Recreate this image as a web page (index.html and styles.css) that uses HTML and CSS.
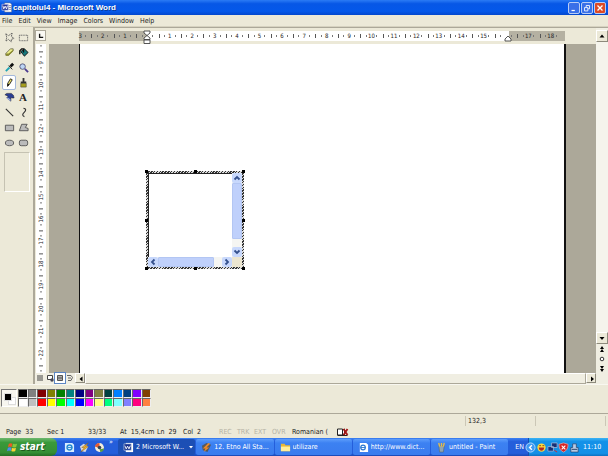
FILE: index.html
```html
<!DOCTYPE html>
<html lang="en">
<head>
<meta charset="utf-8">
<title>capitolul4 - Microsoft Word</title>
<link rel="stylesheet" href="styles.css">
</head>
<body>
<header class="titlebar">
  <svg class="app-icon" viewBox="0 0 12 12"><path fill="#fff" stroke="#778" stroke-width=".6" d="M4 1h6l1.500 1.500V11H4z"/><path stroke="#557" stroke-width=".7" d="M8 4h3M8 6h3M8 8h3"/><path fill="#25349a" stroke="#dde" stroke-width=".6" d="M1 2.500h7v6.500H1z"/><path fill="none" stroke="#fff" d="M2 4l1 3.500L4.500 4.500 6 7.500 7 4"/></svg>
  <h1>capitolul4 - Microsoft Word</h1>
  <div class="window-buttons">
    <button aria-label="Minimize"><svg viewBox="0 0 12 12"><path stroke="#fff" stroke-width="1.500" d="M3 9h4"/></svg></button>
    <button aria-label="Restore"><svg viewBox="0 0 12 12"><path fill="none" stroke="#fff" d="M5 5V3h4v4H7M3 5.500h4v4H3z"/></svg></button>
    <button class="close" aria-label="Close"><svg viewBox="0 0 12 12"><path stroke="#fff" stroke-width="1.600" d="M3 3l6 6M9 3l-6 6"/></svg></button>
  </div>
</header>
<nav class="menu">
  <button>File</button><button>Edit</button><button>View</button><button>Image</button><button>Colors</button><button>Window</button><button>Help</button>
</nav>
<main class="workspace">
  <aside class="toolbox">
    <div class="tools">
      <button aria-label="Free-form select"><svg viewBox="0 0 12 12"><path fill="none" stroke="#555" stroke-dasharray="1.500 .7" d="M2 2l3 2 4-3-1 4 3 2-3 1v3L5 8l-3 2 1-4z"/></svg></button>
      <button aria-label="Select"><svg viewBox="0 0 12 12"><path fill="none" stroke="#666" stroke-dasharray="1.200 .6" d="M1.500 3.500h9v6h-9z"/></svg></button>
      <button aria-label="Eraser"><svg viewBox="0 0 12 12"><path fill="#eff08c" stroke="#554" stroke-width=".8" d="M2 7l5-5h3v2L5 9H2z"/><path fill="#8a8a30" d="M2 7h3l5-4v1.500L5 9.500H2z"/></svg></button>
      <button aria-label="Fill"><svg viewBox="0 0 12 12"><path fill="#18797c" stroke="#111" d="M3 5l4-3 4 4-4 4z"/><path fill="none" stroke="#111" stroke-width="1.500" d="M2 8V4l2-2h2v4"/></svg></button>
      <button aria-label="Pick color"><svg viewBox="0 0 12 12"><path stroke="#111" stroke-width="3" d="M7 5l3-3"/><path stroke="#111" d="M5 4l4 4"/><path stroke="#22a5b4" stroke-width="2" d="M2 10l4-4"/></svg></button>
      <button aria-label="Magnifier"><svg viewBox="0 0 12 12"><circle cx="5" cy="5" r="3" fill="#bcd4f5" stroke="#557" /><path stroke="#4a3a90" stroke-width="2" d="M7.500 7.500L11 11"/></svg></button>
      <button class="selected" aria-label="Pencil"><svg viewBox="0 0 12 12"><path fill="#eee26a" stroke="#111" stroke-width=".9" d="M4 7l3-5 2 1-3 5-2 2z"/><path fill="#111" d="M4 7l2 1-2.500 3z"/></svg></button>
      <button aria-label="Brush"><svg viewBox="0 0 12 12"><path fill="#333" d="M5 1h2v4h2v2H3V5h2z"/><path fill="#a8a01c" stroke="#443" stroke-width=".6" d="M3 7h6v4H3z"/></svg></button>
      <button aria-label="Airbrush"><svg viewBox="0 0 12 12"><path fill="#2a3d94" stroke="#223" stroke-width=".6" d="M1 3l2-1.500h5q3 1.500 3 5H9L7.500 6v4L3 6.500l1.500-2z"/><path fill="#9fb0dc" d="M4 6l3 2v2L3 7z"/></svg></button>
      <button class="text-tool" aria-label="Text">A</button>
      <button aria-label="Line"><svg viewBox="0 0 12 12"><path stroke="#333" stroke-width="1.200" d="M2 2l8 8"/></svg></button>
      <button aria-label="Curve"><svg viewBox="0 0 12 12"><path fill="none" stroke="#333" stroke-width="1.200" d="M6 1.500c3 0 3 2 1 4s-3 4 0 5"/></svg></button>
      <button aria-label="Rectangle"><svg viewBox="0 0 12 12"><path fill="#bbb" stroke="#555" d="M1.500 3.500h9v6h-9z"/></svg></button>
      <button aria-label="Polygon"><svg viewBox="0 0 12 12"><path fill="#bbb" stroke="#555" d="M4 2.500h6L8 6l3 1v2.500H1.500z"/></svg></button>
      <button aria-label="Ellipse"><svg viewBox="0 0 12 12"><ellipse cx="6" cy="6.500" rx="4.500" ry="3" fill="#bbb" stroke="#555"/></svg></button>
      <button aria-label="Rounded rectangle"><svg viewBox="0 0 12 12"><rect x="1.500" y="3.500" width="9" height="6" rx="2" fill="#bbb" stroke="#555"/></svg></button>
    </div>
    <div class="tool-options"></div>
  </aside>
  <section class="document">
    <div class="ruler-row">
      <button class="tab-kind" aria-label="Tab stop"><svg viewBox="0 0 10 10"><path fill="none" stroke="#111" stroke-width="1.500" d="M4 3v4h4"/></svg></button>
      <div class="ruler">
        <div class="marks"><span>3</span><span>2</span><span>1</span><span></span><span>1</span><span>2</span><span>3</span><span>4</span><span>5</span><span>6</span><span>7</span><span>8</span><span>9</span><span>10</span><span>11</span><span>12</span><span>13</span><span>14</span><span>15</span><span></span><span>17</span><span>18</span></div>
        <svg class="indent" viewBox="0 0 8 14"><path fill="#fff" stroke="#444" stroke-width=".9" d="M1 1h6v2L4 5.500 1 3zM4 5.500L7 8v1.500H1V8zM1 10h6v3.500H1z"/></svg>
        <svg class="indent right" viewBox="0 0 8 14"><path fill="#fff" stroke="#444" stroke-width=".9" d="M4 6l3 3v2H1V9z"/></svg>
      </div>
    </div>
    <div class="side-ruler"><div class="marks vertical"><span></span><span>9</span><span>10</span><span>11</span><span>12</span><span>13</span><span>14</span><span>15</span><span>16</span><span>17</span><span>18</span><span>19</span><span>20</span><span>21</span><span>22</span><span></span></div></div>
    <div class="canvas">
      <article class="page">
        <div class="object">
          <div class="object-view"></div>
          <div class="xp-scroll down">
            <button aria-label="Scroll up"><svg viewBox="0 0 10 10"><path fill="none" stroke="#34508c" stroke-width="1.800" d="M2.500 6.500L5 4l2.500 2.500"/></svg></button>
            <i class="thumb"></i>
            <button aria-label="Scroll down"><svg viewBox="0 0 10 10"><path fill="none" stroke="#34508c" stroke-width="1.800" d="M2.500 3.500L5 6l2.500-2.500"/></svg></button>
          </div>
          <div class="xp-scroll across">
            <button aria-label="Scroll left"><svg viewBox="0 0 10 10"><path fill="none" stroke="#34508c" stroke-width="1.800" d="M6.500 2.500L4 5l2.500 2.500"/></svg></button>
            <i class="thumb"></i>
            <button aria-label="Scroll right"><svg viewBox="0 0 10 10"><path fill="none" stroke="#34508c" stroke-width="1.800" d="M3.500 2.500L6 5 3.500 7.500"/></svg></button>
          </div>
          <div class="corner"></div>
          <b class="grip n w"></b><b class="grip n c"></b><b class="grip n e"></b><b class="grip m w"></b><b class="grip m e"></b><b class="grip s w"></b><b class="grip s c"></b><b class="grip s e"></b>
        </div>
      </article>
    </div>
    <div class="vscroll">
      <button class="raised" aria-label="Up"><svg viewBox="0 0 10 10"><path d="M2.500 6.500h5L5 3.500z"/></svg></button>
      <i class="track"></i>
      <button class="raised" aria-label="Down"><svg viewBox="0 0 10 10"><path d="M2.500 4h5L5 7z"/></svg></button>
      <button aria-label="Previous page"><svg viewBox="0 0 10 10"><path d="M3 5l2-3 2 3zM3 8l2-3 2 3z"/></svg></button>
      <button aria-label="Browse"><svg viewBox="0 0 10 10"><circle cx="5" cy="5" r="1.800" fill="#fff" stroke="#333"/></svg></button>
      <button aria-label="Next page"><svg viewBox="0 0 10 10"><path d="M3 2l2 3 2-3zM3 5l2 3 2-3z"/></svg></button>
    </div>
    <div class="hscroll">
      <button aria-label="Normal view"><svg viewBox="0 0 10 10"><path stroke="#444" d="M2 3h6M2 5h6M2 7h6"/></svg></button>
      <button aria-label="Web view"><svg viewBox="0 0 10 10"><path fill="#fff" stroke="#444" d="M2.500 2.500h5v4h-5z"/><circle cx="7" cy="7" r="1.700" fill="#445"/></svg></button>
      <button class="selected" aria-label="Print view"><svg viewBox="0 0 10 10"><path fill="#aaa" stroke="#555" d="M2.500 2.500h5v5h-5z"/><path stroke="#555" d="M3 5h4"/></svg></button>
      <button aria-label="Outline view"><svg viewBox="0 0 10 10"><path fill="none" stroke="#666" d="M2 2.500h4l1.500 2L6 7.500H3M3 5h3"/></svg></button>
      <button class="raised" aria-label="Left"><svg viewBox="0 0 10 10"><path d="M6.500 2.500v5L3.500 5z"/></svg></button>
      <i class="bar"></i>
      <button class="raised" aria-label="Right"><svg viewBox="0 0 10 10"><path d="M4 2.500v5L7 5z"/></svg></button>
    </div>
  </section>
</main>
<section class="palette">
  <div class="current"><i></i><b></b></div>
  <div class="swatches">
    <button class="c-black" aria-label="Black"></button><button class="c-gray" aria-label="Gray"></button><button class="c-maroon" aria-label="Maroon"></button><button class="c-olive" aria-label="Olive"></button><button class="c-green" aria-label="Green"></button><button class="c-teal" aria-label="Teal"></button><button class="c-navy" aria-label="Navy"></button><button class="c-purple" aria-label="Purple"></button><button class="c-moss" aria-label="Moss"></button><button class="c-pine" aria-label="Pine"></button><button class="c-azure" aria-label="Azure"></button><button class="c-steel" aria-label="Steel"></button><button class="c-violet" aria-label="Violet"></button><button class="c-brown" aria-label="Brown"></button>
    <button class="c-white" aria-label="White"></button><button class="c-silver" aria-label="Silver"></button><button class="c-red" aria-label="Red"></button><button class="c-yellow" aria-label="Yellow"></button><button class="c-lime" aria-label="Lime"></button><button class="c-cyan" aria-label="Cyan"></button><button class="c-blue" aria-label="Blue"></button><button class="c-magenta" aria-label="Magenta"></button><button class="c-cream" aria-label="Cream"></button><button class="c-mint" aria-label="Mint"></button><button class="c-ice" aria-label="Ice"></button><button class="c-lilac" aria-label="Lilac"></button><button class="c-rose" aria-label="Rose"></button><button class="c-orange" aria-label="Orange"></button>
  </div>
</section>
<div class="paint-status"><span></span><span>132,3</span><span></span></div>
<div class="word-status">
  <span>Page&nbsp; 33</span><span>Sec 1</span><span>33/33</span><span>At&nbsp; 15,4cm</span><span>Ln&nbsp; 29</span><span>Col&nbsp; 2</span><span class="off">REC</span><span class="off">TRK</span><span class="off">EXT</span><span class="off">OVR</span><span>Romanian (</span>
  <svg viewBox="0 0 12 10"><path fill="#fff" stroke="#222" d="M1 2h5v6H1zM6 3l2-1v6L6 7"/><path stroke="#222" d="M1 8.500h10"/><path stroke="#a31515" stroke-width="1.800" d="M7 2l4 6M11 2L7 8"/></svg>
</div>
<footer class="taskbar">
  <button class="start"><svg viewBox="0 0 12 12"><path fill="#ee5a24" d="M2 2q2-1.500 4 0L5 5.500q-2-1-4 0z"/><path fill="#86c73c" d="M6.600 2q2 1 4.400 0L10 5.500q-2 1-4.300 0z"/><path fill="#4b8cf0" d="M1 6.200q2-1.200 4 0L4 9.700q-2-1-4 .3z"/><path fill="#fcd233" d="M5.500 6.200q2 1.200 4.300 0L9 9.700q-2 1.300-4.300 0z"/></svg>start</button>
  <div class="quick">
    <a href="#" aria-label="Internet Explorer"><svg viewBox="0 0 12 12"><path fill="#d8edff" d="M1 1h8l2 2v8H1z"/><circle cx="6" cy="6" r="2.700" fill="none" stroke="#278ad0" stroke-width="1.500"/><path stroke="#278ad0" d="M4 6h5"/></svg></a>
    <a href="#" aria-label="Winamp"><svg viewBox="0 0 12 12"><path fill="#d9d9de" d="M1 5l4-3 5 3-3 6-4-1z"/><path fill="#f5b828" stroke="#8b5a10" stroke-width=".5" d="M10 1L3 6h3l-4 5 8-6H7z"/></svg></a>
    <a href="#" aria-label="Media player"><svg viewBox="0 0 12 12"><circle cx="6" cy="6" r="4.800" fill="#f5efdc"/><path fill="#e35a30" d="M1 5a5 5 0 0 1 5-4v3L4 6z"/><path fill="#5b9c42" d="M11 7a5 5 0 0 1-4 4L6 8z"/><circle cx="6" cy="6" r="2" fill="#345"/></svg></a>
    <span>»</span>
  </div>
  <div class="tasks">
    <button class="active"><svg viewBox="0 0 12 12"><path fill="#fff" d="M3 1h8v10H3z"/><path fill="#19328e" stroke="#cde" stroke-width=".6" d="M1 2h8v7H1z"/><path fill="none" stroke="#fff" d="M2 4l1.500 3.500L5 4.500l1.500 3L8 4"/></svg><span>2 Microsoft W...</span><svg class="caret" viewBox="0 0 6 6"><path fill="#fff" d="M1 2h4L3 4.500z"/></svg></button>
    <button><svg viewBox="0 0 12 12"><path fill="#57595e" d="M1 4l5-3 5 2-4 8-5-2z"/><path fill="#f18a25" d="M8 1L2 7h3l-2 4 6-5H6l4-4z"/></svg><span>12. Etno All Sta...</span></button>
    <button><svg viewBox="0 0 12 12"><path fill="#e8b636" d="M1 2h4l1 1.500h5V10H1z"/><path fill="#ffed9a" d="M1 5h10v5H1z"/></svg><span>utilizare</span></button>
    <button><svg viewBox="0 0 12 12"><path fill="#fff" d="M2 1h7l2 2v8H2z"/><circle cx="5.500" cy="6" r="2.500" fill="none" stroke="#2c78d2" stroke-width="1.300"/><path stroke="#2c78d2" d="M3 6h5"/></svg><span>http://www.dict...</span></button>
    <button><svg viewBox="0 0 12 12"><path fill="#8fa4b2" stroke="#566" stroke-width=".6" d="M3 4h6l-1 7H4z"/><path stroke="#e6bc49" stroke-width="1.500" d="M4 5L3 1M6 5V1M8 5l1-4"/></svg><span>untitled - Paint</span></button>
  </div>
  <span class="lang">EN</span>
  <div class="tray">
    <button aria-label="Show hidden icons"><svg viewBox="0 0 12 12"><circle cx="6" cy="6" r="5" fill="#3f9af2" stroke="#b8dcff"/><path fill="none" stroke="#fff" stroke-width="1.500" d="M7.500 3.500L5 6l2.500 2.500"/></svg></button>
    <svg viewBox="0 0 12 12"><circle cx="6" cy="6" r="4.500" fill="#ffd83c"/><path fill="#b22a24" d="M3 6h6q-.5 3.500-3 3.500T3 6z"/><path stroke="#742" d="M3.500 4h2M7 4h2"/></svg>
    <svg viewBox="0 0 12 12"><path fill="#182f75" stroke="#a9bddd" stroke-width=".8" d="M5 1h6v5H5zM1 5h6v5H1z"/><path stroke="#d22" d="M8 9l3 2"/></svg>
    <svg viewBox="0 0 12 12"><path fill="#d92424" stroke="#efb1ac" stroke-width=".7" d="M6 1l5 1.500Q11 9 6 11 1 9 1 2.500z"/><path stroke="#fff" stroke-width="1.200" d="M4 4l4 4M8 4L4 8"/></svg>
    <svg viewBox="0 0 12 12"><path fill="#b8cbe5" stroke="#23395f" stroke-width=".7" d="M4 2h4v4h2v5H2V6h2z"/><path stroke="#23395f" d="M3 8h6"/></svg>
    <time>11:10</time>
  </div>
</footer>
</body>
</html>
```
FILE: styles.css
```css
* { box-sizing: border-box; }
body {
  margin: 0;
  min-height: 100vh;
  display: flex;
  flex-direction: column;
  overflow: hidden;
  background: #ece9d8;
  color: #222;
  font: 7px/10px "DejaVu Sans Condensed", "Liberation Sans", sans-serif;
}
button {
  margin: 0;
  padding: 0;
  border: 0;
  background: none;
  color: inherit;
  font: inherit;
}
svg { display: block; flex: none; }

.titlebar {
  height: 15px;
  display: flex;
  align-items: center;
  padding: 0 2px 0 1px;
  background: linear-gradient(#2b7bf5, #0757e6 25%, #0458ea 75%, #0347cd);
  color: #fff;
}
.app-icon { width: 11px; height: 11px; }
.titlebar h1 {
  flex: 1;
  margin: 0 0 0 1px;
  font: bold 8px/12px "Liberation Sans", sans-serif;
  text-shadow: 1px 1px #0a3a9c;
}
.window-buttons { display: flex; gap: 1px; }
.window-buttons button {
  width: 12px;
  height: 12px;
  border: 1px solid #b9cdf5;
  border-radius: 2px;
  background: #3a70e8;
}
.window-buttons .close { background: #dc4a26; }

.menu {
  height: 12px;
  display: flex;
  gap: 6px;
  padding: 1px 2px;
  border-bottom: 1px solid #d6d2c0;
}

.workspace { flex: 1; min-height: 0; display: flex; }
.toolbox { width: 33px; padding: 3px 3px 0 2px; }
.tools { display: grid; grid-template-columns: 1fr 1fr; grid-auto-rows: 15px; }
.tools button { display: grid; place-items: center; border: 1px solid transparent; }
.tools svg { width: 11px; height: 11px; }
.tools .selected { border-color: #a3b8da; border-radius: 2px; background: #fff; }
.tools .text-tool { font: bold 11px/11px "Liberation Serif", serif; }
.tool-options { height: 40px; margin: 2px 0 0 2px; border: 1px solid; border-color: #c5c2b2 #fff #fff #c5c2b2; }

.document {
  flex: 1;
  min-width: 0;
  display: grid;
  grid-template: 16px 1fr 11px / 14px 1fr 12px;
  border: 2px solid #aca899;
  border-width: 1px 0 0 2px;
}
.ruler-row { grid-column: 1 / 3; display: flex; gap: 33px; padding-top: 2px; }
.tab-kind { width: 11px; height: 11px; border: 1px solid #aca899; background: #faf9f3; }
.ruler {
  position: relative;
  flex: 0 1 486px;
  height: 10px;
  margin-top: 1px;
  background: linear-gradient(90deg, #b5b1a2 68px, #fff 68px 430px, #b5b1a2 430px);
}
.marks {
  width: 493px;
  height: 10px;
  margin-left: -10px;
  display: grid;
  grid-auto-flow: column;
  grid-auto-columns: 1fr;
  clip-path: inset(0 0 0 9px);
}
.marks span {
  text-align: center;
  font-size: 6px;
  background:
    linear-gradient(#555, #555) 0 50% / 1px 4px no-repeat,
    linear-gradient(#777, #777) 25% 50% / 1px 2px no-repeat,
    linear-gradient(#777, #777) 75% 50% / 1px 2px no-repeat;
}
.indent { position: absolute; left: 64px; top: -1px; width: 8px; height: 14px; }
.indent.right { left: 425px; }
.side-ruler { width: 10px; margin-left: 1px; background: #fff; overflow: hidden; }
.marks.vertical {
  width: 10px;
  height: 358px;
  margin: -15px 0 -30px;
  grid-auto-flow: row;
  grid-auto-columns: auto;
  grid-auto-rows: 1fr;
  clip-path: none;
}
.vertical span {
  writing-mode: vertical-rl;
  transform: rotate(180deg);
  background:
    linear-gradient(#555, #555) 50% 100% / 4px 1px no-repeat,
    linear-gradient(#777, #777) 50% 25% / 2px 1px no-repeat,
    linear-gradient(#777, #777) 50% 75% / 2px 1px no-repeat;
}

.canvas { padding: 0 30px 0 30px; background: #aca899; }
.page {
  height: 100%;
  padding: 127px 0 0 66px;
  border: 1px solid #111;
  border-width: 0 2px 0 1px;
  background: #fff;
}
.object {
  position: relative;
  width: 98px;
  height: 98px;
  display: grid;
  grid-template: 1fr 10px / 1fr 10px;
  padding: 2px;
  background: repeating-linear-gradient(135deg, #333 0 1px, #ddd 1px 2px);
}
.object-view { border: 1px solid #222; border-width: 1px 0 0 1px; background: #fff; }
.xp-scroll { display: flex; background: #f5f5f2; }
.xp-scroll button { width: 10px; height: 10px; border-radius: 2px; background: #c8d8fc; }
.xp-scroll .thumb { border: 1px solid #b3c6f3; border-radius: 1px; background: #bfd0fb; }
.down { flex-direction: column; }
.down .thumb { height: 56px; margin-bottom: auto; }
.across .thumb { width: 56px; margin-right: auto; }
.corner { background: #ece6d0; }
.grip { position: absolute; width: 3px; height: 3px; background: #000; }
.n { top: -1px; }
.m { top: 48px; }
.s { bottom: -1px; }
.w { left: -1px; }
.c { left: 48px; }
.e { right: -1px; }

.vscroll {
  grid-column: 3;
  grid-row: 1 / 4;
  display: flex;
  flex-direction: column;
  padding: 2px 0 10px;
  background: #f0eee2;
}
.vscroll button { width: 12px; height: 10px; display: grid; place-items: center; }
.vscroll .raised { height: 12px; }
.vscroll svg, .hscroll svg { width: 10px; height: 10px; }
.track { flex: 1; background: #f5f4ec; }
.raised { border: 1px solid; border-color: #fff #8d8a7c #8d8a7c #fff; background: #ece9d8; }
.hscroll { grid-column: 1 / 3; grid-row: 3; display: flex; background: #f0eee2; }
.hscroll button { width: 10px; height: 10px; display: grid; place-items: center; }
.hscroll .selected { outline: 1px solid #5d86c4; background: #fff; }
.bar { flex: 1; border: 1px solid; border-color: #fff #aca899 #aca899 #fff; background: #f0eee2; }

.palette {
  height: 30px;
  display: flex;
  gap: 1px;
  padding: 4px 1px 7px;
  border-top: 1px solid #f8f7f0;
  border-bottom: 1px solid #aca899;
}
.current {
  position: relative;
  width: 16px;
  height: 18px;
  border: 1px solid;
  border-color: #777 #fff #fff #777;
  background: #f7f6ef;
}
.current i, .current b { position: absolute; width: 8px; height: 8px; border: 1px solid #ddd; }
.current i { left: 6px; top: 7px; background: #fff; }
.current b { left: 2px; top: 3px; background: #000; }
.swatches { width: 133px; height: 18px; display: grid; grid-template-columns: repeat(14, 1fr); grid-auto-rows: 1fr; }
.swatches button { border: 1px solid; border-color: #666 #eee #eee #666; }
.c-black { background: #000; } .c-gray { background: #808080; }
.c-maroon { background: #800000; } .c-olive { background: #808000; }
.c-green { background: #008000; } .c-teal { background: #008080; }
.c-navy { background: #000080; } .c-purple { background: #800080; }
.c-moss { background: #808040; } .c-pine { background: #004040; }
.c-azure { background: #0080ff; } .c-steel { background: #004080; }
.c-violet { background: #8000ff; } .c-brown { background: #804000; }
.c-white { background: #fff; } .c-silver { background: #c0c0c0; }
.c-red { background: #f00; } .c-yellow { background: #ff0; }
.c-lime { background: #0f0; } .c-cyan { background: #0ff; }
.c-blue { background: #00f; } .c-magenta { background: #f0f; }
.c-cream { background: #ffff80; } .c-mint { background: #00ff80; }
.c-ice { background: #80ffff; } .c-lilac { background: #8080ff; }
.c-rose { background: #ff0080; } .c-orange { background: #ff8040; }

.paint-status { height: 13px; display: grid; grid-template-columns: 1fr 70px 70px; padding: 2px 2px 1px 0; }
.paint-status span { padding-left: 2px; border-right: 1px solid #cbc7b6; }
.word-status {
  height: 11px;
  display: grid;
  grid-template-columns: 41px 41px 32px 37px 26px 36px 18px 17px 18px 20px 44px 14px;
  padding-left: 6px;
}
.word-status span { white-space: nowrap; }
.word-status svg { width: 13px; height: 10px; }
.off { color: #b5b2a4; }

.taskbar {
  height: 18px;
  display: flex;
  align-items: stretch;
  background: linear-gradient(#3c81f3, #245edb 20%, #245edb 85%, #1a48b4);
  color: #fff;
}
.taskbar svg { width: 11px; height: 11px; }
.start {
  width: 57px;
  display: flex;
  align-items: center;
  gap: 2px;
  padding-left: 7px;
  border-radius: 0 6px 6px 0;
  background: linear-gradient(#6fb86f, #3a9a3a 25%, #358f35 80%, #256e25);
  font: italic bold 10px/14px "DejaVu Sans Condensed", sans-serif;
  text-shadow: 1px 1px #1c5a1c;
}
.quick { width: 61px; display: flex; align-items: center; gap: 4px; padding-left: 7px; }
.quick span { align-self: flex-start; line-height: 9px; }
.tasks { flex: 1; min-width: 0; display: grid; grid-template-columns: repeat(5, 1fr); }
.tasks button {
  min-width: 0;
  display: flex;
  align-items: center;
  gap: 2px;
  padding-left: 5px;
  margin: 1px 1px 1px 0;
  border-radius: 2px;
  background: linear-gradient(#5d9dfb, #3c81f2 25%, #3a7cee);
  text-align: left;
}
.tasks span { flex: 1; white-space: nowrap; overflow: hidden; }
.tasks .active { background: #1c4fb5; }
.tasks .caret { width: 6px; height: 6px; margin-right: 1px; }
.lang { padding: 4px 4px 4px 6px; }
.tray {
  width: 80px;
  display: flex;
  align-items: center;
  border-left: 1px solid #1450b0;
  background: linear-gradient(#3bb3f4, #1491e8 20%, #1390e7 85%, #0d70c0);
}
.tray button { margin-left: -4px; }
.tray time { margin-left: 3px; }
```
